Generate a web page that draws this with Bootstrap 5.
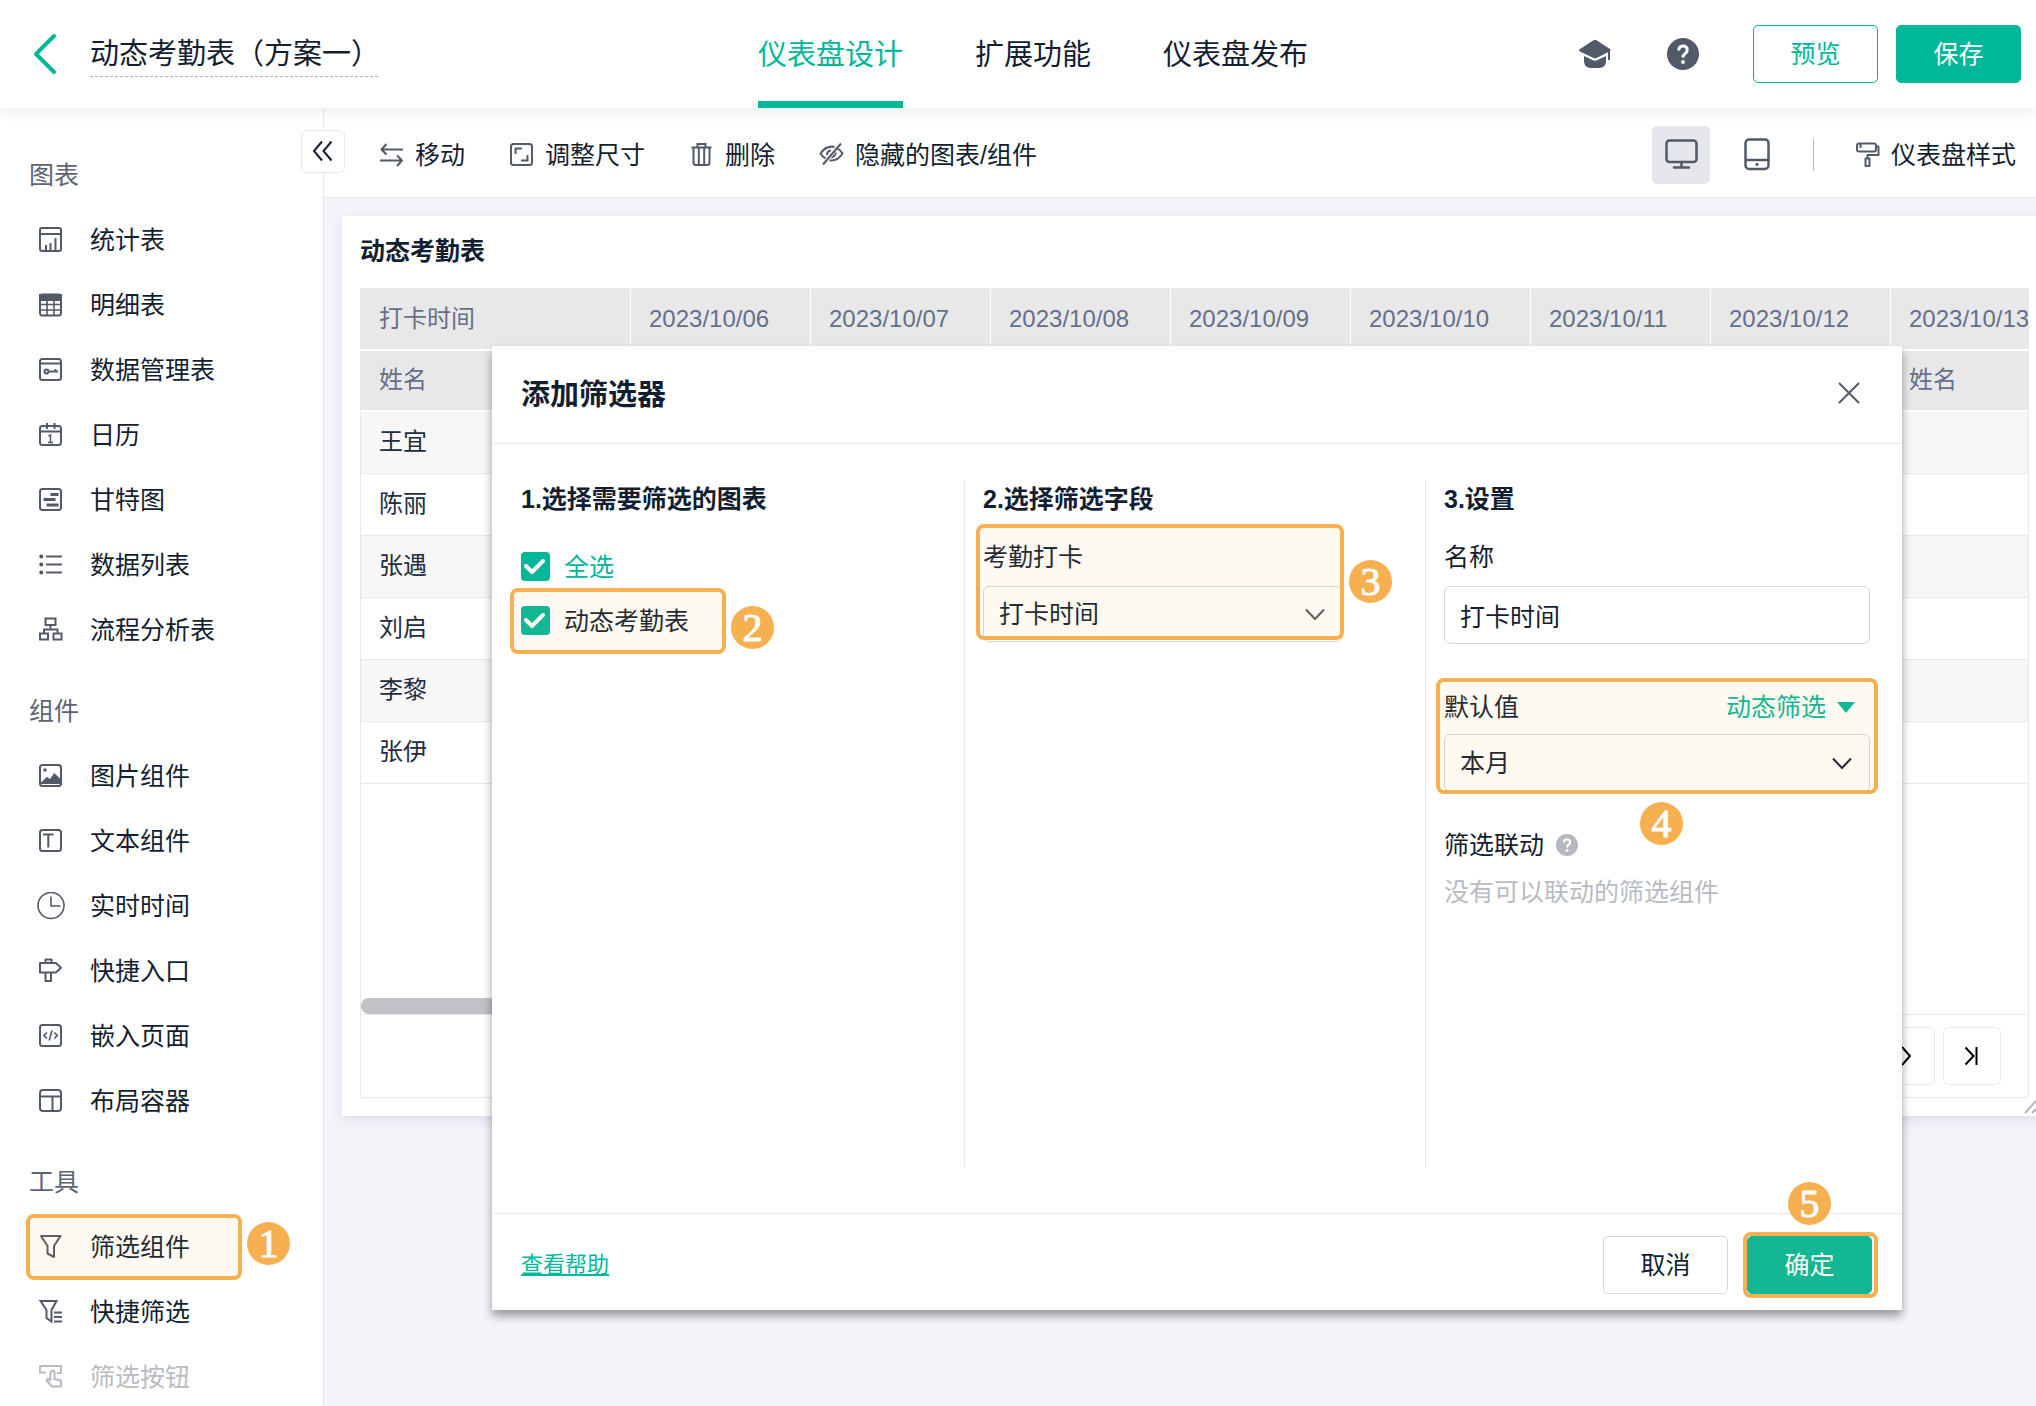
<!DOCTYPE html>
<html lang="zh-CN">
<head>
<meta charset="utf-8">
<meta name="viewport" content="width=device-width, initial-scale=1">
<title>动态考勤表（方案一）</title>
<link href="https://cdn.jsdelivr.net/npm/bootstrap@5.3.0/dist/css/bootstrap.min.css" rel="stylesheet">
<style>
:root{--ink:#141e31;--grey:#525a69;--green:#00b899;--line:#e9e9ec;--amber:#f6b04f}
body{font-family:"Liberation Sans","Noto Sans CJK SC",sans-serif;font-size:25px;line-height:38px;color:var(--ink);background:#f4f5fa}
svg{fill:none;stroke:currentColor;stroke-width:2;flex:none;display:block}
.plain{background:none;border:0;padding:0;color:inherit;font-size:inherit;line-height:inherit}
.ico{color:var(--grey)}
/* header */
.topbar{height:108px;padding-right:15px;box-shadow:0 2px 15px rgba(0,0,0,.09);z-index:5}
.side-slot{flex:1 1 0}
.back{color:var(--green);margin-left:31px}
.back svg{stroke-width:4}
.doc-name{font-size:29px;width:288px;margin-left:30px;border-bottom:1px dashed #b4b4b8;line-height:44px;white-space:nowrap;padding-top:2px}
.tabs{gap:72px;margin-left:45px;font-size:29px}
.tabs a{color:var(--ink);text-decoration:none;display:flex;align-items:center;border-bottom:7px solid transparent;padding-top:9px}
.tabs a.active{color:var(--green);border-color:var(--green)}
.act{height:58px;width:125px;border-radius:5px;font-size:25px;padding:0;line-height:38px}
.act-green{background:var(--green);border-color:var(--green);color:#fff}
.act-line{border-color:var(--green);color:var(--green);background:#fff}
.act-grey{border-color:#d5d6db;color:var(--ink);background:#fff}
.gap-wide{margin-left:54px}
.gap-18{margin-left:18px}
/* sidebar */
.sidebar{width:324px;border-right:1px solid var(--line);padding-top:35px;overflow:hidden}
.sidebar h2{font-size:25px;font-weight:400;line-height:65px;margin:0;padding-left:29px;color:#5c6473}
.sidebar section+section{margin-top:16px}
.tool{height:65px;width:100%;padding-left:37px;gap:25px;text-align:left}
.tool:disabled,.tool:disabled .ico{color:#b9bbc3}
.fold{left:-23px;top:22px;width:44px;height:43px;border:1px solid var(--line);border-radius:6px;background:#fff;z-index:2}
/* workspace */
.work{flex:1 1 0;min-width:0}
.toolbar{height:90px;padding:5px 20px 0 55px;border-bottom:1px solid var(--line)}
.toolbar .group{gap:44px}
.toolbar .cmd{gap:11px}
.dev{width:58px;height:58px;border-radius:5px}
.dev.active{background:#e6e7ec}
.rule{width:1px;height:32px;background:#b9bbc3;margin:0 41px 0 27px}
/* chart card */
.chart{margin:18px -11px 0 18px;height:900px;padding:16px 18px 18px;box-shadow:0 4px 12px rgba(60,60,130,.13)}
.chart h1{font-size:25px;font-weight:600;line-height:38px;margin:0 0 18px}
.grid-box{border:1px solid var(--line);overflow:hidden}
.att{table-layout:fixed;width:1710px;margin:0;border-collapse:separate;border-spacing:0;font-size:24px}
.att th,.att td{height:62px;padding:0 0 0 18px;vertical-align:middle;font-weight:400;line-height:36px;white-space:nowrap}
.att th{background:#e8e8e8;color:#64708b;border-bottom:2px solid #fff;border-right:1px solid #fff}
.att tr+tr th{height:61px}
.att td{border-bottom:1px solid var(--line);color:#222d42}
.att tbody tr:nth-child(odd) td{background:#f7f7f7}
.thumb{height:16px;width:60%;border-radius:8px;background:#c1c2c6}
.pager{height:83px;border-top:1px solid var(--line);padding-right:27px;gap:8px}
.pager button{width:58px;height:58px;border:1px solid var(--line);border-radius:6px;background:#fff;display:flex;align-items:center;justify-content:center}
.corner{right:11px;bottom:2px;color:#b4b4b8}
/* dialog */
.dlg{left:492px;right:134px;top:346px;z-index:10;background:#fff;box-shadow:0 6px 9px rgba(0,0,0,.38)}
.dlg-head{height:98px;padding:0 42px 0 29px;border-bottom:1px solid var(--line)}
.dlg-head h2{font-size:29px;font-weight:600;margin:0;line-height:44px}
.dlg-body{padding:36px 32px 46px 29px}
.dlg-body .pane{min-height:687px}
.pane+.pane{border-left:1px solid var(--line);padding-left:18px}
.p1{flex:1 1 443px}.p2{flex:1 1 461px}.p3{flex:1 1 445px}
.pane h3{font-size:25px;font-weight:600;line-height:38px;margin:0}
.opts{margin-top:34px;gap:25px}
.opt{gap:14px;height:29px}
.tick{appearance:none;width:29px;height:29px;border-radius:4px;margin:0;background:var(--green) url("data:image/svg+xml,%3Csvg xmlns='http://www.w3.org/2000/svg' viewBox='0 0 29 29'%3E%3Cpath d='M5 14l6 6L22 9' fill='none' stroke='%23fff' stroke-width='4' stroke-linecap='round' stroke-linejoin='round'/%3E%3C/svg%3E")}
.lab{margin:20px 0 10px;display:block}
.box{width:100%;height:58px;border:1px solid #d5d6db;border-radius:6px;background:#fff;padding:0 15px;font-size:25px;line-height:38px;color:var(--ink);appearance:none}
.box.short{height:56px}
.field{width:360px;max-width:100%}
.chev{right:18px;top:0;bottom:0;margin:auto}
.green{color:var(--green)}
.mode{padding-right:15px;gap:11px}
.defrow{margin-top:44px}
.linkage{margin-top:34px;gap:12px}
.linkage svg{color:#b6b8bf;stroke-width:3}
.none-yet{margin-top:9px;color:#b9bbc3}
.dlg-foot{height:97px;border-top:1px solid var(--line);padding:6px 30px 0 29px}
.dlg-foot .pair{gap:19px}
.help{color:var(--green);font-size:22px}
/* tutorial marks */
.hl{position:absolute;border:4px solid var(--amber);border-radius:8px;background:rgba(246,176,79,.08);pointer-events:none;z-index:3}
.num{position:absolute;width:43px;height:43px;border-radius:50%;background:var(--amber);color:#fff;font:40px/43px "Liberation Serif",serif;-webkit-text-stroke:1px #fff;text-align:center;z-index:3}
.h1x{left:26px;top:-1px;width:216px;height:66px}.n1{left:247px;top:7px}
.h2x{left:-11px;top:-18px;width:216px;height:66px}.n2{left:210px;top:0}
.h3x{left:-7px;right:-1px;top:-14px;height:116px}.n3{right:-49px;top:22px}
.h4x{left:-8px;right:-8px;top:-10px;height:116px}.n4{left:196px;top:114px}
.h5x{left:-4px;right:-6px;top:-4px;bottom:-4px}.n5{left:41px;top:-54px}
</style>
<script src="https://cdn.jsdelivr.net/npm/bootstrap@5.3.0/dist/js/bootstrap.bundle.min.js"></script>
</head>
<body class="vh-100 overflow-hidden d-flex flex-column">

<header class="topbar bg-white d-flex position-relative">
  <div class="side-slot d-flex align-items-center">
    <button class="plain back" aria-label="返回"><svg width="29" height="44" viewBox="0 0 29 44" stroke-linecap="round" stroke-linejoin="round"><path d="M23 4L5 22l18 18"/></svg></button>
    <div class="doc-name">动态考勤表（方案一）</div>
  </div>
  <nav class="tabs d-flex" aria-label="主导航">
    <a class="active" href="#">仪表盘设计</a><a href="#">扩展功能</a><a href="#">仪表盘发布</a>
  </nav>
  <div class="side-slot d-flex align-items-center justify-content-end">
    <button class="plain ico me-5" aria-label="学院"><svg width="32" height="32" viewBox="0 1 32 32"><path d="M0 13.500Q0 12.500 1 12L14.500 3.200q1.500-.8 3 0L31 12q1.200 1 0 2.200L17.500 21q-1.500.7-3 0L1 14.500Q0 14 0 13.500z" fill="currentColor" stroke="none"/><path d="M5 19l9.500 4.500q1.500.7 3 0L27 19v5q0 7-7 7h-8q-7 0-7-7z" fill="currentColor" stroke="none"/><path d="M30 13v10"/></svg></button>
    <button class="plain ico ms-2" aria-label="帮助"><svg width="32" height="32" viewBox="0 0 32 32"><circle cx="16" cy="16" r="16" fill="currentColor" stroke="none"/><path d="M11.800 12.500q0-4.500 4.200-4.500t4.200 4q0 2.300-2.200 3.700Q16 17 16 19.500" stroke="#fff" stroke-width="3"/><circle cx="16" cy="24" r="1.900" fill="#fff" stroke="none"/></svg></button>
    <button class="btn act act-line gap-wide">预览</button>
    <button class="btn act act-green gap-18">保存</button>
  </div>
</header>

<div class="d-flex flex-grow-1 overflow-hidden">
  <aside class="sidebar bg-white flex-shrink-0">
    <section>
      <h2>图表</h2>
      <button class="plain tool d-flex align-items-center"><svg class="ico" width="28" height="28" viewBox="0 0 28 28"><rect x="3" y="2" width="21" height="23" rx="2"/><path d="M3 8h21M9 25v-6M13.500 25v-8M18.500 25V12"/></svg>统计表</button>
      <button class="plain tool d-flex align-items-center"><svg class="ico" width="28" height="28" viewBox="0 0 28 28"><rect x="3" y="3.500" width="21" height="21" rx="2.500"/><path d="M3 4h21v5H3z" fill="currentColor"/><path d="M10 9v15M17 9v15M3 13.500h21M3 19h21" stroke-width="1.600"/></svg>明细表</button>
      <button class="plain tool d-flex align-items-center"><svg class="ico" width="28" height="28" viewBox="0 0 28 28"><rect x="3" y="3" width="21" height="21" rx="2.500"/><path d="M3 7.500h21M11.500 15.500H21M18.500 15.500v-2.500"/><circle cx="9.500" cy="15.500" r="2"/></svg>数据管理表</button>
      <button class="plain tool d-flex align-items-center"><svg class="ico" width="28" height="28" viewBox="0 0 28 28"><rect x="3" y="5" width="21" height="19" rx="2.500"/><path d="M3 10.500h21M10 2v6M17.500 2v6"/><path d="M11.500 15l2-1v7.500M11 21.500h5" stroke-width="1.500"/></svg>日历</button>
      <button class="plain tool d-flex align-items-center"><svg class="ico" width="28" height="28" viewBox="0 0 28 28"><rect x="3" y="3" width="21" height="21" rx="2.500"/><path d="M13.500 8.500h8M6.500 13.500h12M9.500 19h12" stroke-width="3"/></svg>甘特图</button>
      <button class="plain tool d-flex align-items-center"><svg class="ico" width="28" height="28" viewBox="0 0 28 28"><path d="M9 5.500h16M9 13.500h16M9 21.500h16"/><path d="M4.200 5.500h.1M4.200 13.500h.1M4.200 21.500h.1" stroke-linecap="round" stroke-width="4"/></svg>数据列表</button>
      <button class="plain tool d-flex align-items-center"><svg class="ico" width="28" height="28" viewBox="0 0 28 28"><rect x="8.500" y="2.500" width="10" height="6.500"/><rect x="3" y="17.500" width="8" height="6"/><rect x="16.500" y="17.500" width="8" height="6"/><path d="M13.500 9v4.500M7 17.500v-4h13.500v4"/></svg>流程分析表</button>
    </section>
    <section>
      <h2>组件</h2>
      <button class="plain tool d-flex align-items-center"><svg class="ico" width="28" height="28" viewBox="0 0 28 28"><rect x="3" y="3" width="21" height="21" rx="2.500"/><path d="M5 21l5-5 3 2.500 4.500-6L23 18v3z" fill="currentColor"/><circle cx="8" cy="8" r="1.800" fill="currentColor" stroke="none"/></svg>图片组件</button>
      <button class="plain tool d-flex align-items-center"><svg class="ico" width="28" height="28" viewBox="0 0 28 28"><rect x="3" y="3" width="21" height="21" rx="2.500"/><path d="M6 7.500h10.500M11.300 7.500V20.500"/></svg>文本组件</button>
      <button class="plain tool d-flex align-items-center"><svg class="ico" width="28" height="28" viewBox="0 0 28 28"><circle cx="14" cy="13.500" r="13" stroke-width="1.600"/><path d="M14 4.500v9.500h9.500" stroke-width="1.600"/></svg>实时时间</button>
      <button class="plain tool d-flex align-items-center"><svg class="ico" width="28" height="28" viewBox="0 0 28 28" stroke-linejoin="round"><path d="M3 6h16l5 4.800-5 4.700H3zM8.500 6V2.500h6V6M8.500 15.500V24h5.500v-8.500"/></svg>快捷入口</button>
      <button class="plain tool d-flex align-items-center"><svg class="ico" width="28" height="28" viewBox="0 0 28 28"><rect x="3" y="3" width="21" height="21" rx="2.500"/><path d="M10 10.500L7 13.500l3 3M17.300 10.500l3 3-3 3M15 8.500l-2.800 10" stroke-width="1.700"/></svg>嵌入页面</button>
      <button class="plain tool d-flex align-items-center"><svg class="ico" width="28" height="28" viewBox="0 0 28 28"><rect x="3" y="3" width="21" height="21" rx="3"/><path d="M3 9.500h21M15.500 9.500V24"/></svg>布局容器</button>
    </section>
    <section>
      <h2>工具</h2>
      <div class="position-relative">
        <button class="plain tool d-flex align-items-center"><svg class="ico" width="28" height="28" viewBox="0 0 28 28" stroke-linejoin="round"><path d="M4 3h19.500L17 13v11l-6.500-3.500V13z"/></svg>筛选组件</button>
        <span class="hl h1x"></span><span class="num n1">1</span>
      </div>
      <button class="plain tool d-flex align-items-center"><svg class="ico" width="28" height="28" viewBox="0 0 28 28"><path d="M3.500 3h16L14.500 12v11.500L9.500 20v-8z"/><path d="M17 14.500h8M17 19h8M17 23.500h8"/></svg>快捷筛选</button>
      <button class="plain tool d-flex align-items-center" disabled><svg class="ico" width="28" height="28" viewBox="0 0 28 28" stroke-linejoin="round"><path d="M9 9.500H3V3h21v7h-4M13.500 17V9q2.500-3 4 0v7l6.500 1.500v6H15l-5.500-6 1.500-2 2.500 2.500"/></svg>筛选按钮</button>
    </section>
  </aside>

  <main class="work position-relative">
    <button class="plain fold position-absolute d-flex align-items-center justify-content-center" aria-label="收起"><svg width="22" height="22" viewBox="0 0 22 22"><path d="M10 1.500L2 11l8 9.500M19.500 1.500L11.500 11l8 9.500"/></svg></button>
    <div class="toolbar bg-white d-flex align-items-center justify-content-between">
      <div class="group d-flex">
        <button class="plain cmd d-flex align-items-center"><svg class="ico" width="25" height="25" viewBox="0 0 25 25" stroke-linejoin="round"><path d="M24 7.500H2.500l5-5.500M2.500 7.500l5 5M1 18.500h22l-5-5M23 18.500l-5 5.500"/></svg>移动</button>
        <button class="plain cmd d-flex align-items-center"><svg class="ico" width="25" height="25" viewBox="0 0 25 25"><rect x="2" y="2" width="21" height="21" rx="2.500"/><path d="M6.500 12V6.500H13M18.500 13v5.500H12"/></svg>调整尺寸</button>
        <button class="plain cmd d-flex align-items-center"><svg class="ico" width="25" height="25" viewBox="0 0 25 25"><path d="M2.500 5.500h20M8.500 5.500V2h8v3.500M4.500 5.500v15q0 2.500 2.500 2.500h11q2.500 0 2.500-2.500v-15M9.800 6v17M15.200 6v17"/></svg>删除</button>
        <button class="plain cmd d-flex align-items-center"><svg class="ico" width="25" height="25" viewBox="0 0 25 25"><path d="M15.500 5q-8-2-14 6.500 2 3.500 5 5M18.500 6.500q3.500 2 5 5-5 8-13 7M22 1.500L4 22.500M8 13q0-4 4-4.500"/><path d="M17.500 9.500q1 6-6 7z" fill="currentColor" stroke="none"/></svg>隐藏的图表/组件</button>
      </div>
      <div class="d-flex align-items-center">
        <button class="plain dev active d-flex align-items-center justify-content-center" aria-label="桌面端"><svg class="ico" width="34" height="34" viewBox="0 0 34 34"><g stroke-width="2.500"><rect x="2.500" y="2.500" width="30" height="21.500" rx="3"/><path d="M17.500 24v5M10 29.500h15" stroke-linecap="round"/></g></svg></button>
        <button class="plain dev d-flex align-items-center justify-content-center gap-18" aria-label="移动端"><svg class="ico" width="34" height="34" viewBox="0 0 34 34"><g stroke-width="2.500"><rect x="5.500" y="1.500" width="23" height="29.500" rx="3.500"/><path d="M5.500 22h23"/></g><circle cx="17" cy="26.300" r="1.600" fill="currentColor" stroke="none"/></svg></button>
        <span class="rule"></span>
        <button class="plain cmd d-flex align-items-center"><svg class="ico" width="25" height="25" viewBox="0 0 25 25" stroke-linejoin="round"><rect x="2" y="1.500" width="19" height="8" rx="2"/><path d="M5.500 2v4M21 4.500h2.500V13h-11v3.500M10.500 16.500h4V24h-4z"/></svg>仪表盘样式</button>
      </div>
    </div>

    <div class="chart bg-white d-flex flex-column position-relative">
      <h1>动态考勤表</h1>
      <div class="grid-box flex-grow-1 d-flex flex-column">
        <table class="att">
          <colgroup><col style="width:270px"><col span="8"></colgroup>
          <thead>
            <tr><th>打卡时间</th><th>2023/10/06</th><th>2023/10/07</th><th>2023/10/08</th><th>2023/10/09</th><th>2023/10/10</th><th>2023/10/11</th><th>2023/10/12</th><th>2023/10/13</th></tr>
            <tr><th>姓名</th><th colspan="7"></th><th>姓名</th></tr>
          </thead>
          <tbody>
            <tr><td>王宜</td><td colspan="8"></td></tr>
            <tr><td>陈丽</td><td colspan="8"></td></tr>
            <tr><td>张遇</td><td colspan="8"></td></tr>
            <tr><td>刘启</td><td colspan="8"></td></tr>
            <tr><td>李黎</td><td colspan="8"></td></tr>
            <tr><td>张伊</td><td colspan="8"></td></tr>
          </tbody>
        </table>
        <div class="thumb mt-auto"></div>
        <div class="pager d-flex align-items-center justify-content-end">
          <button aria-label="下一页"><svg width="20" height="20" viewBox="0 0 20 20"><path d="M6 1l8 9-8 9"/></svg></button>
          <button aria-label="末页"><svg width="20" height="20" viewBox="0 0 20 20"><path d="M3.500 1.500l8 8.500-8 8.500M14.500 1v18"/></svg></button>
        </div>
      </div>
      <svg class="corner position-absolute" width="12" height="14" viewBox="0 0 12 14"><path d="M1 13L12 1M8 13l4-4"/></svg>
    </div>
  </main>
</div>

<div class="dlg position-absolute" role="dialog" aria-labelledby="dlgTitle">
  <div class="dlg-head d-flex align-items-center justify-content-between">
    <h2 id="dlgTitle">添加筛选器</h2>
    <button class="plain ico mb-1" aria-label="关闭"><svg width="22" height="22" viewBox="0 0 22 22" stroke-linecap="round"><path d="M1.500 1.500l19 19M20.500 1.500l-19 19"/></svg></button>
  </div>
  <div class="dlg-body d-flex">
    <div class="pane p1">
      <h3>1.选择需要筛选的图表</h3>
      <div class="opts d-flex flex-column">
        <label class="opt d-flex align-items-center green"><input type="checkbox" class="tick" checked>全选</label>
        <div class="position-relative">
          <label class="opt d-flex align-items-center"><input type="checkbox" class="tick" checked>动态考勤表</label>
          <span class="hl h2x"></span><span class="num n2">2</span>
        </div>
      </div>
    </div>
    <div class="pane p2">
      <h3>2.选择筛选字段</h3>
      <div class="field position-relative">
        <label class="lab" for="fieldSel">考勤打卡</label>
        <div class="position-relative">
          <select id="fieldSel" class="box short"><option>打卡时间</option></select>
          <svg class="chev ico position-absolute" width="20" height="13" viewBox="0 0 20 13"><path d="M1 1.500l9 9.500 9-9.500"/></svg>
        </div>
        <span class="hl h3x"></span><span class="num n3">3</span>
      </div>
    </div>
    <div class="pane p3">
      <h3>3.设置</h3>
      <label class="lab" for="nameInp">名称</label>
      <input id="nameInp" class="box d-block" type="text" value="打卡时间">
      <div class="defrow position-relative">
        <div class="d-flex justify-content-between">
          <label for="defSel">默认值</label>
          <button class="plain green mode d-flex align-items-center">动态筛选<svg width="18" height="11" viewBox="0 0 18 11"><path d="M0 0h18L9 11z" fill="currentColor" stroke="none"/></svg></button>
        </div>
        <div class="position-relative mt-2">
          <select id="defSel" class="box d-block"><option>本月</option></select>
          <svg class="chev position-absolute" width="20" height="13" viewBox="0 0 20 13"><path d="M1 1.500l9 9.500 9-9.500"/></svg>
        </div>
        <span class="hl h4x"></span><span class="num n4">4</span>
      </div>
      <div class="linkage d-flex align-items-center">筛选联动<svg width="22" height="22" viewBox="0 0 32 32"><circle cx="16" cy="16" r="16" fill="currentColor" stroke="none"/><path d="M11.500 12.500q0-4.500 4.500-4.500t4.500 4q0 2.300-2.500 3.700Q16 17 16 19.500" stroke="#fff"/><circle cx="16" cy="24" r="2" fill="#fff" stroke="none"/></svg></div>
      <div class="none-yet">没有可以联动的筛选组件</div>
    </div>
  </div>
  <div class="dlg-foot d-flex align-items-center justify-content-between">
    <a class="help" href="#">查看帮助</a>
    <div class="pair d-flex">
      <button class="btn act act-grey">取消</button>
      <div class="position-relative"><button class="btn act act-green">确定</button><span class="hl h5x"></span><span class="num n5">5</span></div>
    </div>
  </div>
</div>
</body>
</html>
